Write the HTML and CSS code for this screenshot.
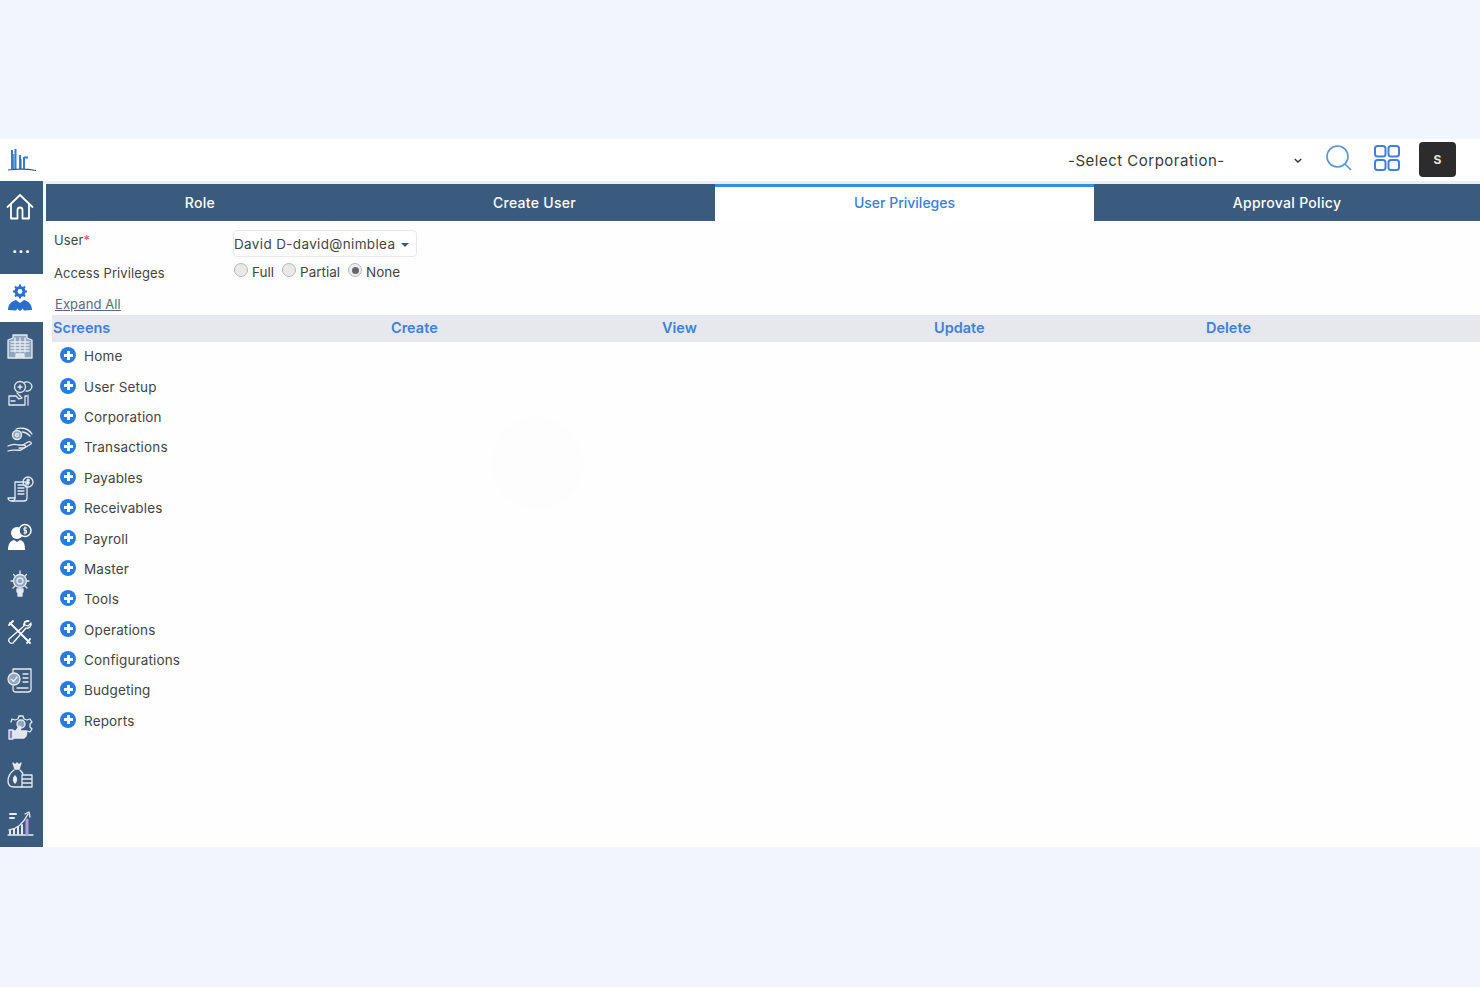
FILE: index.html
```html
<!DOCTYPE html>
<html lang="en">
<head>
<meta charset="utf-8">
<title>User Privileges</title>
<link rel="stylesheet" href="styles.css">
</head>
<body>
<div class="app">
  <aside class="sidebar">
    <div class="logo">
      <svg viewBox="0 0 32 28" width="32" height="28"><g fill="none" stroke="#2f7fd6" stroke-width="2"><path d="M8 4v19M11.500 3v20M16 9v14"/><path d="M20 11v12M20 11.500h4"/></g><path d="M4 24c8-1 20-1 28 .5" stroke="#3a5b7e" stroke-width="1.200" fill="none"/><path d="M9.800 8v15M17 13v10" stroke="#3a5b7e" stroke-width="1"/></svg>
    </div>
    <div class="nav-top">
      <div class="nav-item"><svg viewBox="0 0 28 28" width="28" height="28" class="ic"><path d="M1.500 14 14 2l12.500 12"/><path d="M5 11.500V25.500h6.500V17a2.500 2.500 0 0 1 5 0v8.500H23V11.500"/></svg></div>
      <div class="nav-dots">...</div>
    </div>
    <div class="nav-active">
      <svg viewBox="0 0 26 28" width="26" height="28"><g fill="#2a6fd0"><circle cx="13" cy="7.500" r="5.500"/><path d="M1 26c0-6 4-9 8-10l4 3 4-3c4 1 8 4 8 10l-8 .5-4-5-4 5z"/><path d="M11.500 19h3l1 6-2.500 2-2.500-2z"/></g><circle cx="13" cy="7.500" r="2.400" fill="#fff"/><path d="M13 .5v2M13 12.500v2M6 7.500h2M18 7.500h2M8 2.500l1.500 1.500M16.500 11l1.500 1.500M18 2.500 16.500 4M9.500 11 8 12.500" stroke="#2a6fd0" stroke-width="2"/></svg>
    </div>
    <div class="nav-rest">
      <div class="nav-item"><svg viewBox="0 0 28 28" width="28" height="28" class="ic thin"><path d="M2 26V8l5-2V3h14v3l5 2v18z" fill="#8fa6bd"/><path d="M5 10h18M5 13h18M5 16h18M5 19h18M9 6v14M14 6v14M19 6v14"/><path d="M10 26v-4h8v4" fill="#dfe6ee"/></svg></div>
      <div class="nav-item"><svg viewBox="0 0 28 28" width="28" height="28" class="ic thin"><circle cx="14" cy="7" r="5.500"/><path d="M18 2.500a5.500 5.500 0 0 1 8 3.500 5 5 0 0 1-6 5"/><path d="M3 16h7l3 3 3-1-5-5M3 25v-9M3 25h16v-9h3v9"/><path d="M5 21h4M12 7h4M14 5v4"/><path d="M22 15v10" stroke="#b39ad8"/></svg></div>
      <div class="nav-item"><svg viewBox="0 0 28 28" width="28" height="28" class="ic thin"><circle cx="11" cy="8" r="4.500" fill="#8fa6bd"/><circle cx="11" cy="8" r="1.500"/><path d="M10 2c5-2 12-1 16 5M16 5c3 0 6 2 8 4"/><path d="M2 19c4-2 7-2 10-1h6c2 0 2 3-1 3h-4"/><path d="M2 24c5-2 9 0 13-1l10-6c1-1-1-3-3-2l-5 3"/></svg></div>
      <div class="nav-item"><svg viewBox="0 0 28 28" width="28" height="28" class="ic thin"><path d="M6 26c2 0 3-1 3-3V7h11v5"/><path d="M6 26c-2 0-4-1-4-3h7M6 26h12c2 0 3-1 3-3V12"/><path d="M12 10h6M12 13h6M12 16h6M12 19h6"/><circle cx="22" cy="7" r="5"/><path d="M22 4v6M23.500 5h-2.500v2h2v1.500h-2.500"/></svg></div>
      <div class="nav-item"><svg viewBox="0 0 28 28" width="28" height="28"><path d="M2 27c0-6 2-9 6-10l3 2 3-2c4 1 5 4 5 10z" fill="#fff"/><circle cx="11" cy="10" r="6" fill="#fff"/><circle cx="19" cy="7.500" r="6" fill="#3a5b7e" stroke="#fff" stroke-width="1.500"/><path d="M21 5h-3v2.500h2.500V10H17.500M19 3.500v8" fill="none" stroke="#fff" stroke-width="1"/></svg></div>
      <div class="nav-item"><svg viewBox="0 0 28 28" width="28" height="28" class="ic thin"><circle cx="14" cy="11" r="6.500" fill="#8fa6bd"/><circle cx="14" cy="11" r="3"/><path d="M14 1v3M5 11h2M21 11h2M7.500 4.500 9 6M20.500 4.500 19 6M7 18l2-2M21 18l-2-2"/><path d="M11 19h6v3h-6zM12 23h4v3h-4z" fill="#dfe6ee"/></svg></div>
      <div class="nav-item"><svg viewBox="0 0 28 28" width="28" height="28" class="ic"><path d="M4 5 24 25M7 3l-4 4"/><path d="M23 3c-3-1-6 2-5 5L3 21a3 3 0 0 0 4 4l13-15c3 1 6-2 5-5l-3 3-3-1-.5-3z" stroke-width="1.300"/><path d="M24 21l-3 4"/></svg></div>
      <div class="nav-item"><svg viewBox="0 0 28 28" width="28" height="28" class="ic thin"><path d="M7 7V3h18v20a3 3 0 0 1-3 3H10c-2 0-3-1-3-3v-3"/><path d="M17 8h5M17 12h5M17 16h5M11 22h11"/><circle cx="8" cy="13" r="6" fill="#8fa6bd"/><path d="m5 13 2.500 2.500L11 11"/></svg></div>
      <div class="nav-item"><svg viewBox="0 0 28 28" width="28" height="28" class="ic thin"><path d="M13 3h4l1 3 3 1 3-1 2 3-2 2v3l2 2-2 3-3-1-2 2M13 3l-1 3-3 1-3-1-1 3"/><circle cx="15" cy="11" r="4" fill="#8fa6bd"/><path d="M3 17h4v9H3z" fill="#8c7fc4"/><path d="M7 18h3l3-5 2 1-1 4h6c1 0 1 6-2 7H7z" fill="#dfe6ee"/></svg></div>
      <div class="nav-item"><svg viewBox="0 0 28 28" width="28" height="28" class="ic thin"><path d="M7 2l2 2 2-2 2 2 2-2-2 6H9z" fill="#dfe6ee"/><path d="M8 9c-4 3-6 7-6 11 0 4 2 6 6 6h8"/><path d="M14 9c1 1 2 2 3 4"/><path d="M9 15c-2 2-2 5 0 7 2-2 2-5 0-7z" fill="#fff"/><path d="M16 14h10v12H16zM16 18h10M16 22h10"/></svg></div>
      <div class="nav-item"><svg viewBox="0 0 28 28" width="28" height="28" class="ic thin"><path d="M2 26h25"/><path d="M4 5h6M4 9h4" stroke-width="2"/><path d="M3 21c8-1 14-6 19-16"/><path d="m19 5 4-2 1 5"/><path d="M4 25v-3M8 25v-5M12 25v-7M16 25v-9" stroke-width="2"/><path d="M21 25V11" stroke="#b39ad8" stroke-width="3"/></svg></div>
    </div>
  </aside>
  <main class="main">
    <header class="topbar">
      <div class="corp">
        <span>-Select Corporation-</span>
        <svg viewBox="0 0 10 6" width="8" height="5" class="chev"><path d="M1 1l4 4 4-4" fill="none" stroke="#333" stroke-width="1.700"/></svg>
      </div>
      <svg viewBox="0 0 26 26" width="26" height="26" class="search"><circle cx="11.500" cy="11.500" r="10.500" fill="none" stroke="#5a94dc" stroke-width="1.600"/><path d="m19 19 6 6" stroke="#5a94dc" stroke-width="1.600" fill="none"/></svg>
      <svg viewBox="0 0 26 26" width="26" height="26" class="grid-ic"><g fill="none" stroke="#3f80d8" stroke-width="2"><rect x="1" y="1" width="10.500" height="10.500" rx="2.500"/><rect x="14.500" y="1" width="10.500" height="10.500" rx="2.500"/><rect x="1" y="15" width="10.500" height="10" rx="2.500"/><rect x="14.500" y="15" width="10.500" height="10" rx="2.500"/></g></svg>
      <div class="avatar">S</div>
    </header>
    <nav class="tabs">
      <div class="tab tab-role">Role</div>
      <div class="tab tab-user">Create User</div>
      <div class="tab tab-priv active">User Privileges</div>
      <div class="tab tab-appr">Approval Policy</div>
    </nav>
    <section class="content">
      <div class="form-row row-user">
        <label class="label">User<span class="req">*</span></label>
        <div class="select">David D-david@nimblea <i class="caret"></i></div>
      </div>
      <div class="form-row row-access">
        <label class="label">Access Privileges</label>
        <div class="radios">
          <span class="radio-item"><i class="radio"></i>Full</span>
          <span class="radio-item"><i class="radio"></i>Partial</span>
          <span class="radio-item"><i class="radio on"></i>None</span>
        </div>
      </div>
      <a class="expand">Expand All</a>
      <div class="thead">
        <span>Screens</span><span>Create</span><span>View</span><span>Update</span><span>Delete</span>
      </div>
      <ul class="tree">
        <li><i class="plus"></i>Home</li>
        <li><i class="plus"></i>User Setup</li>
        <li><i class="plus"></i>Corporation</li>
        <li><i class="plus"></i>Transactions</li>
        <li><i class="plus"></i>Payables</li>
        <li><i class="plus"></i>Receivables</li>
        <li><i class="plus"></i>Payroll</li>
        <li><i class="plus"></i>Master</li>
        <li><i class="plus"></i>Tools</li>
        <li><i class="plus"></i>Operations</li>
        <li><i class="plus"></i>Configurations</li>
        <li><i class="plus"></i>Budgeting</li>
        <li><i class="plus"></i>Reports</li>
      </ul>
      <div class="spinner"></div>
    </section>
  </main>
</div>
</body>
</html>
```

FILE: styles.css
```css
* { box-sizing: border-box; }
html, body { margin: 0; height: 100%; }
body {
  background: #f2f5fe;
  font-family: Inter, "Open Sans", "Liberation Sans", sans-serif;
  color: #3d3d3d;
  padding-top: 139px;
  overflow: hidden;
}
.app { display: flex; height: 708px; background: #fefefe; }

.sidebar { width: 43px; flex: none; display: flex; flex-direction: column; background: #fff; }
.logo { height: 42px; flex: none; display: flex; align-items: center; justify-content: center; padding-right: 4px; }
.nav-top { height: 93px; flex: none; background: #3a5b7e; padding-top: 2px; }
.nav-item { height: 48px; display: flex; align-items: center; justify-content: center; padding-right: 4px; }
.nav-dots { height: 42px; color: #fff; font-weight: 700; font-size: 16px; letter-spacing: 1px; text-align: center; line-height: 33px; }
.nav-active { height: 48px; flex: none; display: flex; align-items: center; justify-content: center; padding-right: 4px; }
.nav-rest { flex: 1; min-height: 0; background: #3a5b7e; }
.nav-rest .nav-item { height: 47.700px; }
.ic { fill: none; stroke: #fff; stroke-width: 1.800; stroke-linejoin: round; stroke-linecap: round; }
.ic.thin { stroke: #e6ebf2; stroke-width: 1.300; }

.main { flex: 1; min-width: 0; display: flex; flex-direction: column; padding-left: 3px; }
.topbar { height: 45px; flex: none; margin-left: -3px; background: #fff; border-bottom: 3px solid #eceef1; position: relative; }
.corp { position: absolute; left: 1025px; top: 8px; width: 235px; display: flex; align-items: center; justify-content: space-between; font-size: 15px; letter-spacing: 0.500px; color: #3a3a3a; height: 26px; }
.chev { margin-right: 1px; }
.search { position: absolute; left: 1283px; top: 6px; }
.grid-ic { position: absolute; left: 1331px; top: 6px; }
.avatar { position: absolute; left: 1376px; top: 3px; width: 37px; height: 35px; background: #2c2c2c; border-radius: 4px; color: #e8e4da; font-size: 12px; font-weight: 700; display: flex; align-items: center; justify-content: center; }

.tabs { display: grid; grid-template-columns: 308px 361px 379px 386px; height: 37px; flex: none; background: #3a5b7e; }
.tab { display: flex; align-items: center; justify-content: center; color: #fff; font-size: 14px; font-weight: 500; letter-spacing: 0.300px; }
.tab.active { background: #fff; color: #3a7fdc; border-top: 3px solid #3a8ae0; padding-bottom: 3px; letter-spacing: 0; }

.content { flex: 1; position: relative; padding: 8px 0 0 6px; }
.form-row { display: flex; }
.label { width: 181px; padding-left: 2px; font-size: 13px; letter-spacing: 0.100px; color: #444; }
.req { color: #e05050; }
.row-user { height: 33px; }
.row-user .label { padding-top: 3px; }
.select { width: 184px; height: 27px; margin-top: 1px; border: 1px solid #e6eaf0; border-radius: 4px; font-size: 13.500px; letter-spacing: 0.350px; color: #444; display: flex; align-items: center; justify-content: space-between; white-space: nowrap; padding: 0 7px 0 0; background: #fff; }
.caret { width: 0; height: 0; border: 4px solid transparent; border-top-color: #3a5b7e; border-bottom: 0; margin-top: 2px; }
.row-access { height: 31px; }
.row-access .label { padding-top: 3px; }
.radios { display: flex; gap: 8px; margin-left: 1px; font-size: 13.500px; color: #444; }
.radio-item { display: flex; align-items: center; height: 20px; gap: 4px; }
.radio { width: 14px; height: 14px; border-radius: 50%; border: 1px solid #b8b8b8; background: #e9e9e9; margin-top: -4px; position: relative; }
.radio.on { background: #eee; }
.radio.on::after { content: ""; position: absolute; inset: 2.500px; border-radius: 50%; background: #666; }
.expand { display: block; margin-left: 3px; font-size: 13px; letter-spacing: 0.100px; line-height: 22px; height: 22px; color: #5a6a85; text-decoration: underline; }
.thead { height: 27px; background: #e6e8ee; display: grid; grid-template-columns: 338px 271px 272px 272px 1fr; align-items: center; padding: 0 0 2px 1px; font-size: 14.500px; font-weight: 600; color: #4080dc; }
.tree { list-style: none; margin: -1px 0 0; padding: 0; }
.tree li { height: 30.400px; display: flex; align-items: center; gap: 8px; padding-left: 8px; font-size: 13.500px; letter-spacing: 0.150px; color: #444; }
.plus { width: 16px; height: 16px; flex: none; border-radius: 50%; background: #2a7be0; position: relative; margin-top: -2px; }
.plus::before, .plus::after { content: ""; position: absolute; background: #fff; }
.plus::before { left: 3.500px; right: 3.500px; top: 6.500px; height: 3px; }
.plus::after { top: 3.500px; bottom: 3.500px; left: 6.500px; width: 3px; }
.spinner { position: absolute; left: 445px; top: 196px; width: 92px; height: 92px; border-radius: 50%; background: #fdfdfd; }
```
